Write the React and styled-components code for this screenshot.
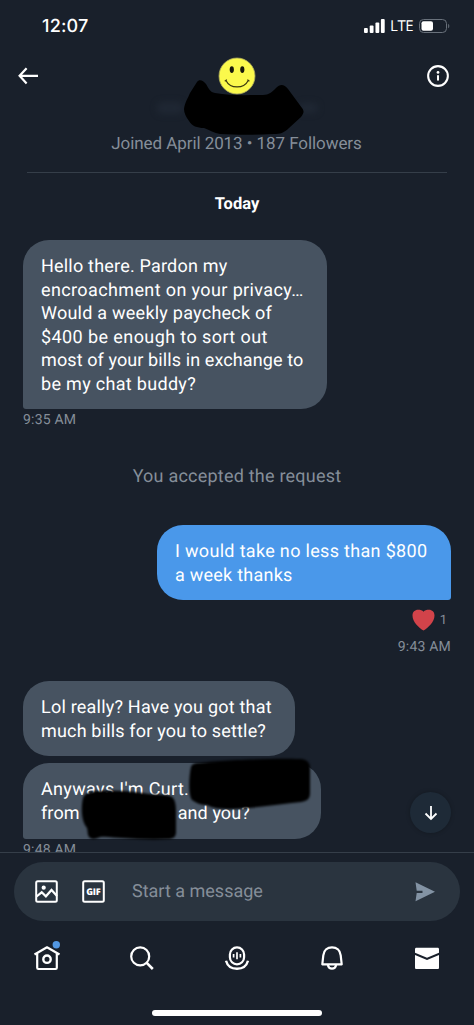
import React from 'react';
import styled, { createGlobalStyle } from 'styled-components';

const colors = {
    background: '#19202b',
    bubble: '#475361',
    blue: '#4a98ea',
    muted: '#858e99',
    line: '#353e49',
    composer: '#2a343f',
    heart: '#d2434a',
}

const GlobalStyle = createGlobalStyle`
    * {
        box-sizing: border-box;
    }
    body {
        margin: 0;
        background-color: ${colors.background};
        font-family: Roboto, "Liberation Sans", sans-serif;
        text-rendering: geometricPrecision;
    }
`

const Screen = styled.div`
    display: flex;
    flex-direction: column;
    width: 474px;
    height: 1025px;
    overflow: hidden;
    color: white;
    background-color: ${colors.background};
`

const StatusBar = styled.div`
    display: flex;
    justify-content: space-between;
    align-items: center;
    height: 52px;
    padding: 0 24px 0 42px;
`

const Clock = styled.span`
    font-family: Inter, sans-serif;
    font-size: 18px;
    font-weight: 500;
    letter-spacing: .2px;
`

const StatusIcons = styled.div`
    display: flex;
    align-items: center;
`

const Network = styled.span`
    font-family: "Open Sans", sans-serif;
    font-size: 15px;
    font-weight: 500;
    line-height: 14px;
    margin: 0 6px 0 5px;
    letter-spacing: -.5px;
`

const Header = styled.header`
    display: flex;
    justify-content: space-between;
    align-items: flex-start;
    height: 121px;
    margin: 0 27px;
    border-bottom: 1px solid ${colors.line};
`

const HeaderButton = styled.button`
    display: flex;
    justify-content: ${props => props.justify};
    align-items: center;
    width: 24px;
    height: 48px;
    padding: 0;
    border: 0;
    background: none;
    color: white;
    margin: 0 ${props => props.right || 0}px 0 ${props => props.left || 0}px;
`

const Profile = styled.div`
    display: flex;
    flex-direction: column;
    align-items: center;
    padding: 5px 0 0 5px;
`

const HiddenName = styled.div`
    position: relative;
    width: 180px;
    height: 37px;
`

const Scribble = styled.svg`
    position: absolute;
    left: ${props => props.left}px;
    top: ${props => props.top}px;
    overflow: visible;
    pointer-events: none;
`

const Muted = styled.p`
    margin: 0;
    color: ${colors.muted};
    font-size: ${props => props.size || 18}px;
    line-height: 25px;
    letter-spacing: ${props => props.spacing || 0}px;
    white-space: nowrap;
`

const Conversation = styled.main`
    position: relative;
    display: flex;
    flex-direction: column;
    height: 679px;
    padding: 19px 23px 0;
    overflow: hidden;
    > * {
        flex-shrink: 0;
    }
`

const Day = styled.h2`
    margin: 0 0 23px;
    font-size: 16.5px;
    font-weight: 700;
    line-height: 25px;
    text-align: center;
`

const Notice = styled.div`
    display: flex;
    justify-content: center;
    padding: 32px 0 36px;
`

const Bubble = styled.div`
    position: relative;
    align-self: ${props => props.own ? 'flex-end' : 'flex-start'};
    width: ${props => props.width}px;
    padding: 15px 18px 13px;
    margin-bottom: ${props => props.gap || 0}px;
    border-radius: 26px;
    border-bottom-left-radius: ${props => props.tail === 'left' ? 3 : 26}px;
    border-bottom-right-radius: ${props => props.tail === 'right' ? 3 : 26}px;
    background-color: ${props => props.own ? colors.blue : colors.bubble};
`

const Line = styled.span`
    display: block;
    font-size: 18px;
    line-height: 23.55px;
    letter-spacing: ${props => props.spacing}px;
    white-space: nowrap;
`

const Blank = styled.span`
    display: inline-block;
    width: ${props => props.width}px;
`

const Time = styled.time`
    align-self: ${props => props.own ? 'flex-end' : 'flex-start'};
    margin-bottom: ${props => props.gap || 0}px;
    color: ${colors.muted};
    font-size: 14px;
    line-height: 23px;
    letter-spacing: .2px;
`

const Reaction = styled.div`
    display: flex;
    align-self: flex-end;
    align-items: center;
    gap: 5px;
    height: 36px;
    padding: 4px 4px 0 0;
    color: ${colors.muted};
    font-size: 13px;
`

const ScrollDown = styled.button`
    position: absolute;
    right: 23px;
    bottom: 19px;
    display: flex;
    justify-content: center;
    align-items: center;
    width: 41px;
    height: 41px;
    padding: 0;
    border: 0;
    border-radius: 50%;
    background-color: #1e2a37;
    box-shadow: 0 0 4px rgba(0, 0, 0, .25);
`

const ComposerRow = styled.div`
    height: 70px;
    padding: 9px 14px 0;
    border-top: 1px solid ${colors.line};
`

const Composer = styled.div`
    display: flex;
    align-items: center;
    height: 59px;
    padding: 0 25px 0 21px;
    border-radius: 30px;
    background-color: ${colors.composer};
`

const Placeholder = styled.span`
    flex-grow: 1;
    margin-left: 27px;
    color: ${colors.muted};
    font-size: 18px;
`

const ToolIcon = styled.svg`
    margin-right: ${props => props.gap || 0}px;
`

const Nav = styled.nav`
    display: grid;
    grid-template-columns: repeat(5, 1fr);
    height: 72px;
`

const NavItem = styled.a`
    display: flex;
    justify-content: center;
    align-items: center;
`

const HomeBar = styled.div`
    width: 170px;
    height: 6px;
    margin: 16px auto 0;
    border-radius: 3px;
    background-color: white;
`

function Smiley() {
    return (
        <svg width="38" height="38" viewBox="0 0 38 38">
            <circle cx="19" cy="19" r="18" fill="#fbf94c" stroke="#a9a75a" strokeWidth=".8" />
            <ellipse cx="13.8" cy="12.6" rx="2.1" ry="3.4" fill="#17170c" />
            <ellipse cx="24.3" cy="12.6" rx="2.1" ry="3.4" fill="#17170c" />
            <path d="M7.8 23.2c4.5 9 18 9 22.6 0M6.8 24.2l2-1.6M29.4 22.6l2 1.6" fill="none" stroke="#3c3a10" strokeWidth="1.2" />
        </svg>
    )
}

function Icon({ children, size = 28 }) {
    return (
        <svg width={size} height={size} viewBox="0 0 28 28" fill="none" stroke="white" strokeWidth="2.2" strokeLinejoin="round">
            {children}
        </svg>
    )
}

function App() {
    return (
        <Screen>
            <GlobalStyle />
            <StatusBar>
                <Clock>12:07</Clock>
                <StatusIcons>
                    <svg width="21" height="14" viewBox="0 0 22 14" preserveAspectRatio="none" fill="white">
                        <rect x="0" y="9" width="4" height="5" rx="1" />
                        <rect x="6" y="6.5" width="4" height="7.5" rx="1" />
                        <rect x="12" y="3.5" width="4" height="10.5" rx="1" />
                        <rect x="17.7" y="0" width="4" height="14" rx="1" />
                    </svg>
                    <Network>LTE</Network>
                    <svg width="31" height="14" viewBox="0 0 31 14">
                        <rect x=".5" y=".5" width="27" height="13" rx="4" fill="none" stroke="#69717b" />
                        <rect x="2.5" y="2.3" width="11.5" height="9.4" rx="2" fill="white" />
                        <path d="M29.2 4.7c1.5.8 1.5 3.8 0 4.6z" fill="#69717b" />
                    </svg>
                </StatusIcons>
            </StatusBar>

            <Header>
                <HeaderButton justify="flex-start" left={-9} aria-label="Back">
                    <svg width="20" height="18" viewBox="0 0 20 18" fill="none" stroke="white" strokeWidth="2.2">
                        <path d="M8.6 1.2L1.6 8.8l7 7.6M1.8 8.8H20" />
                    </svg>
                </HeaderButton>
                <Profile>
                    <Smiley />
                    <HiddenName>
                        <Scribble left={0} top={-15} width="180" height="60" viewBox="147 80 180 60">
                            <g style={{ filter: 'blur(3px)' }} fill="#1f2733">
                                <rect x="157" y="102" width="26" height="12" rx="5" />
                                <rect x="298" y="103" width="20" height="10" rx="5" />
                            </g>
                            <path
                                d="M197 82c2-3 6-2 9 2 3 5 4 8 9 9 16 3 32 2 48 2 6 0 9-3 13-7s8-4 12 1l14 19c3 4 1 6-1 9l-12 11c-5 5-9 6-15 6-19 1-38 1-54 0-6-1-10-4-16-6-7 0-12-2-15-7-3-4-5-8-5-12 1-7 4-11 6-16z"
                                fill="black"
                                style={{ filter: 'blur(.7px)' }}
                            />
                        </Scribble>
                    </HiddenName>
                    <Muted size={17} spacing={-.07}>Joined April 2013 • 187 Followers</Muted>
                </Profile>
                <HeaderButton justify="flex-end" right={-3} aria-label="Info">
                    <Icon size={26}>
                        <circle cx="14" cy="14" r="11.5" strokeWidth="2.4" />
                        <circle cx="14" cy="9.8" r="1.6" fill="white" stroke="none" />
                        <path d="M14 13.1v6.2" strokeWidth="2.4" />
                    </Icon>
                </HeaderButton>
            </Header>

            <Conversation>
                <Day>Today</Day>
                <Bubble width={304} tail="left">
                    <Line spacing={.2}>Hello there. Pardon my</Line>
                    <Line spacing={.38}>encroachment on your privacy…</Line>
                    <Line spacing={.24}>Would a weekly paycheck of</Line>
                    <Line spacing={.41}>$400 be enough to sort out</Line>
                    <Line spacing={.1}>most of your bills in exchange to</Line>
                    <Line spacing={.31}>be my chat buddy?</Line>
                </Bubble>
                <Time>9:35 AM</Time>

                <Notice>
                    <Muted spacing={.22}>You accepted the request</Muted>
                </Notice>

                <Bubble own width={294} tail="right">
                    <Line spacing={.32}>I would take no less than $800</Line>
                    <Line spacing={.24}>a week thanks</Line>
                </Bubble>
                <Reaction>
                    <svg width="23" height="22" viewBox="0 0 23 22">
                        <path d="M11.5 21.5C7 19 .5 13 .5 6.5.5 3 3 .8 6 .8c2.400 0 4.500.4 5.500 1.900C12.500 1.200 14.600.8 17 .8c3 0 5.500 2.200 5.500 5.700 0 6.500-6.500 12.500-11 15z" fill={colors.heart} />
                    </svg>
                    <span>1</span>
                </Reaction>
                <Time own gap={22}>9:43 AM</Time>

                <Bubble width={272} gap={7}>
                    <Line spacing={.21}>Lol really? Have you got that</Line>
                    <Line spacing={.17}>much bills for you to settle?</Line>
                </Bubble>
                <Bubble width={298} tail="left">
                    <Line spacing={.33}>Anyways I'm Curt.</Line>
                    <Line spacing={.1}>from<Blank width={98} />and you?</Line>
                    <Scribble left={165} top={-4} width="124" height="50" viewBox="0 0 124 50">
                        <path
                            d="M3 8c1-3 4-4 8-4C30 1 90-1 111 0c7 0 11 3 11 9v25c0 6-3 8-9 9-20 2-44 6-70 7-12 0-18-1-24-4-6 0-11-2-15-5-4-5-3-24-1-33z"
                            fill="black"
                            style={{ filter: 'blur(.8px)' }}
                        />
                    </Scribble>
                    <Scribble left={58} top={28} width="96" height="50" viewBox="0 0 96 50">
                        <path
                            d="M2 7c2-5 8-7 16-7 16-1 35 0 50 3 8 1 18 0 23 3 3 2 4 8 4 14v21c0 5-3 7-8 7-16 1-32 0-46-1-8 0-14-2-22-1-4 2-8 3-11 0-2-3-1-6-2-9C0 30 0 16 2 7z"
                            fill="black"
                            style={{ filter: 'blur(.8px)' }}
                        />
                    </Scribble>
                </Bubble>
                <Time>9:48 AM</Time>

                <ScrollDown aria-label="Scroll down">
                    <svg width="14" height="16" viewBox="0 0 14 16" fill="none" stroke="white" strokeWidth="1.8">
                        <path d="M7 1v13M1.500 8.500L7 14l5.500-5.500" />
                    </svg>
                </ScrollDown>
            </Conversation>

            <ComposerRow>
                <Composer>
                    <ToolIcon width="23" height="23" viewBox="0 0 23 23" fill="none" stroke="white" strokeWidth="2" gap={24}>
                        <rect x="1.200" y="1.200" width="20.600" height="20.600" rx="1.500" />
                        <circle cx="8.700" cy="7.700" r="2.100" fill="white" stroke="none" />
                        <path d="M1.500 16.500l5.200-4.200 4.200 4 5.600-6.300 5.500 6" strokeWidth="2.200" />
                    </ToolIcon>
                    <ToolIcon width="23" height="23" viewBox="0 0 23 23">
                        <rect x="1.200" y="1.200" width="20.600" height="20.600" rx="1.500" fill="none" stroke="white" strokeWidth="2" />
                        <text x="11.500" y="14.800" textAnchor="middle" fill="white" fontFamily="Open Sans" fontSize="9.200" fontWeight="800" textLength="14.500">GIF</text>
                    </ToolIcon>
                    <Placeholder>Start a message</Placeholder>
                    <ToolIcon width="20" height="20" viewBox="0 0 20 20">
                        <path d="M.5.300L20 9.800.5 19.300 1.700 11H7.500V8.800H1.700z" fill="#8393a4" />
                    </ToolIcon>
                </Composer>
            </ComposerRow>

            <Nav>
                <NavItem>
                    <svg width="28" height="34" viewBox="0 3 28 34" fill="none" stroke="white" strokeWidth="2.2" strokeLinejoin="round">
                        <path d="M1.500 16.500L14 9.300l12.500 7.200M4.200 15.500v14.300c0 .8.400 1.200 1.200 1.200h17.200c.8 0 1.200-.4 1.200-1.200V15.500" />
                        <circle cx="14" cy="21.200" r="3.700" strokeWidth="2.400" />
                        <circle cx="23.300" cy="6.800" r="3.700" fill="#5297e2" stroke="none" />
                    </svg>
                </NavItem>
                <NavItem>
                    <Icon>
                        <circle cx="12.200" cy="12.400" r="9" />
                        <path d="M18.500 18.700l6.300 6.300" strokeWidth="2.600" />
                    </Icon>
                </NavItem>
                <NavItem>
                    <Icon>
                        <rect x="6.900" y="3.400" width="14.200" height="17" rx="7.100" />
                        <path d="M3 16.800c1.300 4.800 5.500 8 11 8s9.700-3.200 11-8" strokeWidth="2.400" />
                        <path d="M10.600 10v3.500M14 8.300v7M17.400 10v3.500" strokeWidth="1.700" />
                    </Icon>
                </NavItem>
                <NavItem>
                    <Icon>
                        <path d="M4.300 20.300l1-9C5.800 6.200 9.500 3.300 14 3.300s8.200 2.900 8.700 8l1 9z" />
                        <path d="M9.800 21c.6 2.400 2.200 3.700 4.200 3.700s3.600-1.300 4.200-3.700" />
                    </Icon>
                </NavItem>
                <NavItem>
                    <Icon>
                        <path d="M2 5.300c0-1 .5-1.500 1.500-1.500h21c1 0 1.500.5 1.500 1.500v3.500l-12 4.900L2 8.800zM2 11l12 4.900L26 11v12.400c0 1-.5 1.500-1.500 1.500h-21c-1 0-1.500-.5-1.500-1.500z" fill="white" stroke="none" />
                    </Icon>
                </NavItem>
            </Nav>
            <HomeBar />
        </Screen>
    )
}

export default App;
